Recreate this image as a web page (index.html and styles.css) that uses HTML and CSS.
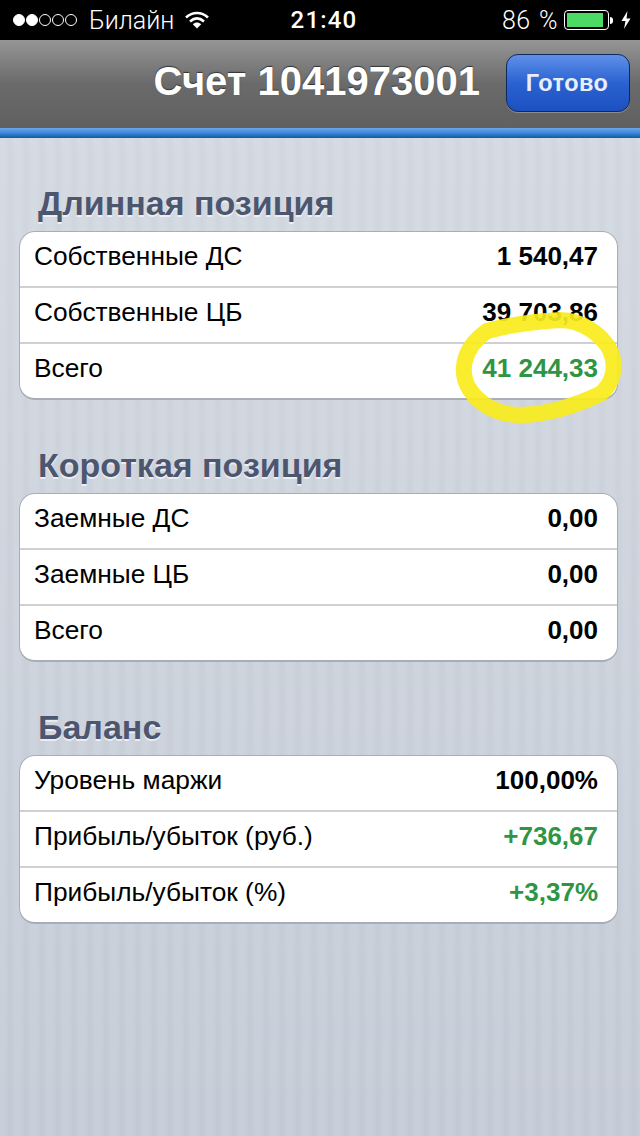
FILE: index.html
```html
<!DOCTYPE html>
<html>
<head>
  <title>Счет 1041973001</title>
  <link rel="stylesheet" href="styles.css">
</head>
<body>
  <div class="status-bar">
    <div class="status-left">
      <span class="signal">
        <i class="dot full"></i><i class="dot full"></i><i class="dot"></i><i class="dot"></i><i class="dot"></i>
      </span>
      <span>Билайн</span>
      <svg class="wifi" width="24" height="18" viewBox="0 0 24 18">
        <path d="M1 6.5C7.5 .5 16.5 .5 23 6.5" fill="none" stroke="#fff" stroke-width="2.6"/>
        <path d="M5 10.5C9.5 6.5 14.5 6.5 19 10.5" fill="none" stroke="#fff" stroke-width="2.6"/>
        <path d="M7.8 13.2C10.5 10.8 13.5 10.8 16.2 13.2L12 17.5Z" fill="#fff"/>
      </svg>
    </div>
    <div class="status-time">21:40</div>
    <div class="status-right">
      <span class="percent">86 %</span>
      <span class="battery"><span class="battery-level"></span></span>
      <span class="battery-tip"></span>
      <svg class="bolt" width="10" height="18" viewBox="0 0 10 18">
        <path d="M6.5 0L0.5 10H4.5L3 18L9.5 7.5H5.5Z" fill="#fff"/>
      </svg>
    </div>
  </div>

  <div class="nav-bar">
    <div class="nav-title">Счет 1041973001</div>
    <div class="done-button">Готово</div>
  </div>
  <div class="blue-line"></div>

  <div class="content">
    <h2>Длинная позиция</h2>
    <div class="card">
      <div class="row"><span>Собственные ДС</span><b>1 540,47</b></div>
      <div class="row"><span>Собственные ЦБ</span><b>39 703,86</b></div>
      <div class="row"><span>Всего</span><b class="green">41 244,33</b></div>
    </div>

    <h2>Короткая позиция</h2>
    <div class="card">
      <div class="row"><span>Заемные ДС</span><b>0,00</b></div>
      <div class="row"><span>Заемные ЦБ</span><b>0,00</b></div>
      <div class="row"><span>Всего</span><b>0,00</b></div>
    </div>

    <h2>Баланс</h2>
    <div class="card">
      <div class="row"><span>Уровень маржи</span><b>100,00%</b></div>
      <div class="row"><span>Прибыль/убыток (руб.)</span><b class="green">+736,67</b></div>
      <div class="row"><span>Прибыль/убыток (%)</span><b class="green">+3,37%</b></div>
    </div>
  </div>

  <!-- hand drawn marker circle on top of the page -->
  <svg class="marker" width="176" height="124" viewBox="0 0 176 124">
    <path d="M35 27C53 22 73 18 108 16C130 16 150 31 158 46C166 64 160 81 148 90C123 102 93 111 68 111C43 111 26 98 18 86C8 71 8 46 35 27Z" fill="none" stroke="#f8ec1c" stroke-width="16" opacity="0.92"/>
  </svg>
</body>
</html>
```

FILE: styles.css
```css
* {
  box-sizing: border-box;
}

html, body {
  margin: 0;
  height: 100%;
}

body {
  position: relative;
  width: 640px;
  height: 1136px;
  overflow: hidden;
  font-family: "Liberation Sans", Arial, sans-serif;
  background-color: #c8ced9;
  background-image:
    repeating-linear-gradient(90deg, rgba(255,255,255,0.05) 0, rgba(255,255,255,0.05) 4px, rgba(0,0,0,0.015) 10px, rgba(255,255,255,0.05) 16px),
    linear-gradient(#d6dbe3, #c5ccd7);
}

.status-bar {
  display: flex;
  align-items: center;
  justify-content: space-between;
  height: 40px;
  padding: 0 9px 0 13px;
  background: #000;
  color: #fff;
  font-family: Roboto, "Liberation Sans", sans-serif;
  font-size: 25px;
  font-weight: 300;
}

.status-left, .status-right {
  display: flex;
  align-items: center;
  width: 240px;
}

.status-right {
  justify-content: flex-end;
}

.percent {
  word-spacing: 2px;
  letter-spacing: 0.4px;
}

.signal {
  display: flex;
  gap: 1px;
  margin-right: 12px;
}

.dot {
  display: block;
  width: 12px;
  height: 12px;
  border: 1px solid #fff;
  border-radius: 50%;
}

.dot.full {
  background: #fff;
}

.wifi {
  margin-left: 11px;
}

.status-time {
  margin-left: 4px;
  font-size: 24px;
  font-weight: 500;
  letter-spacing: 1.2px;
}

.battery {
  display: block;
  width: 45px;
  height: 20px;
  margin-left: 6px;
  padding: 2px;
  border: 1px solid #fff;
  border-radius: 4px;
}

.battery-level {
  display: block;
  width: 36px;
  height: 100%;
  background: #4cd964;
}

.battery-tip {
  display: block;
  width: 3px;
  height: 7px;
  margin-left: 1px;
  background: #fff;
  border-radius: 0 3px 3px 0;
}

.bolt {
  margin-left: 8px;
}

.nav-bar {
  display: flex;
  align-items: center;
  justify-content: flex-end;
  height: 88px;
  padding: 0 10px 2px 0;
  background: linear-gradient(#959595, #6a6a6a 50%, #606060);
}

.nav-title {
  margin: 0 26px 4px 0;
  color: #fff;
  font-size: 40px;
  font-weight: 700;
  text-shadow: 0 -1px 1px #333;
}

.done-button {
  display: flex;
  align-items: center;
  justify-content: center;
  width: 124px;
  height: 58px;
  padding-right: 2px;
  border: 1px solid #0e2a5c;
  border-radius: 12px;
  background: linear-gradient(#5f90ea, #2a62d0 50%, #1c50c0);
  box-shadow: 0 1px 0 rgba(255,255,255,0.25);
  color: #e8eefa;
  font-size: 23.5px;
  font-weight: 700;
  letter-spacing: 0.4px;
}

.blue-line {
  height: 10px;
  background: linear-gradient(#6aa8ea, #3d87dc 50%, #0c5c9c);
}

.content {
  padding: 0 22px 0 19px;
}

.content h2 {
  margin: 0;
  height: 93px;
  padding: 45px 0 0 19px;
  color: #4c566f;
  font-size: 34px;
  font-weight: 700;
  line-height: 40px;
  text-shadow: 0 2px 0 rgba(255,255,255,0.6);
}

.card {
  border: 1px solid #a9adb5;
  border-bottom-width: 2px;
  border-radius: 16px;
  background: #fff;
  overflow: hidden;
}

.row {
  display: flex;
  align-items: center;
  justify-content: space-between;
  height: 56px;
  padding: 0 19px 5px 14px;
  color: #000;
  font-size: 26.3px;
  border-bottom: 2px solid #d0d0d3;
}

.row:last-child {
  border-bottom: 0;
  height: 54px;
  padding-bottom: 5px;
}

.row b {
  font-size: 26px;
  font-weight: 700;
}

.row b.green {
  color: #2f9444;
}

.marker {
  position: absolute;
  left: 452px;
  top: 304px;
}
```
